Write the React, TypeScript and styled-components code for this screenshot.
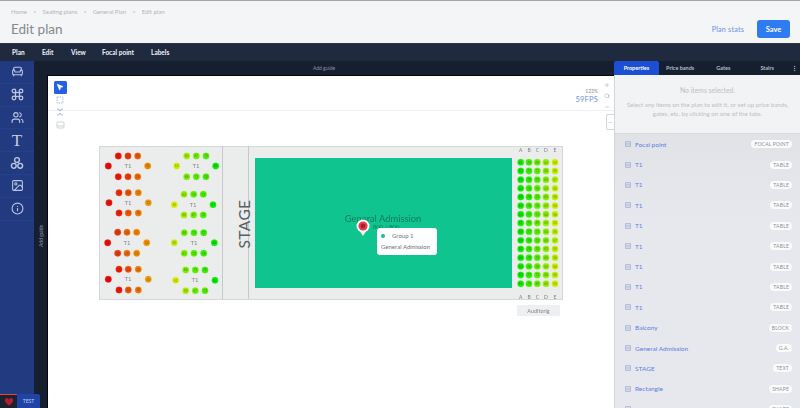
import React from 'react';
import styled, { createGlobalStyle } from 'styled-components';
import { Armchair, Users, Image, Info, Search, Plus, Minus, MousePointer2, MoreVertical } from 'lucide-react';

const GlobalStyle = createGlobalStyle`
  html, body { margin: 0; padding: 0; }
  body { font-family: Lato, "Open Sans", sans-serif; background: #fff; }
`;

const Page = styled.div`
  position: relative;
  width: 800px;
  height: 408px;
  display: flex;
  flex-direction: column;
  overflow: hidden;
`;

const Header = styled.header`
  height: 42px;
  flex: none;
  box-sizing: content-box;
  border-top: 1px solid #a3a5a8;
  border-bottom: 1px solid #30343c;
  background: #f3f5f7;
  display: flex;
  justify-content: space-between;
  align-items: center;
  padding: 0 10px 0 11px;
`;

const Breadcrumbs = styled.div`
  display: flex;
  gap: 6px;
  font-size: 6px;
  line-height: 8px;
  color: #b2b5b9;
  margin-bottom: 5px;
`;

const Title = styled.h1`
  margin: 0;
  font-size: 13.5px;
  line-height: 16px;
  font-weight: 400;
  color: #85888c;
`;

const HeaderActions = styled.div`
  display: flex;
  align-items: center;
  gap: 13px;
  padding-top: 14px;
`;

const LinkButton = styled.span`
  font-size: 7.2px;
  color: #6a8fe8;
  letter-spacing: 0.2px;
`;

const SaveButton = styled.button`
  width: 33px;
  height: 18px;
  border: none;
  border-radius: 3px;
  background: #2f7bf2;
  color: #fff;
  font: 700 7.5px Lato, sans-serif;
  padding: 0;
`;

const MenuBar = styled.nav`
  height: 17px;
  flex: none;
  background: #1f2a3e;
  display: flex;
  align-items: center;
  padding-left: 12px;
`;

const MenuItem = styled.span<{ $w: number }>`
  width: ${(p) => p.$w}px;
  font-size: 6.5px;
  font-weight: 700;
  color: #f1f3f7;
`;

const Body = styled.div`
  flex: 1;
  display: flex;
  min-height: 0;
`;

const SideNav = styled.aside`
  width: 34px;
  flex: none;
  background: #223a80;
  display: flex;
  flex-direction: column;
  align-items: center;
  padding-top: 0;
`;

const SideButton = styled.div`
  width: 34px;
  height: 22.8px;
  display: flex;
  align-items: center;
  justify-content: center;
  color: #bcc7e3;
  border-bottom: 1px solid #27408a;
  box-sizing: border-box;
`;

const SerifT = styled.span`
  font: 400 17px "Liberation Serif", serif;
  color: #c6cfe7;
  line-height: 1;
`;

const Workspace = styled.main`
  flex: 1;
  display: flex;
  flex-direction: column;
  background: #161f30;
  min-width: 0;
`;

const GuideTop = styled.div`
  height: 14px;
  flex: none;
  display: flex;
  align-items: center;
  justify-content: center;
  font-size: 5px;
  color: #8b93a3;
`;

const WorkRow = styled.div`
  flex: 1;
  display: flex;
  min-height: 0;
`;

const GuideLeft = styled.div`
  width: 13px;
  flex: none;
  display: flex;
  align-items: center;
  justify-content: center;
  padding-top: 12px;
  font-size: 5px;
  color: #8b93a3;
  writing-mode: vertical-rl;
  transform: rotate(180deg);
`;

const Canvas = styled.div`
  position: relative;
  flex: 1;
  background: #fff;
  border-left: 1px solid #05070c;
  border-top: 1px solid #05070c;
`;

const GuideLine = styled.div`
  position: absolute;
  left: 0;
  right: 0;
  top: 34px;
  border-top: 1px solid #eef0f2;
`;

const ToolColumn = styled.div`
  position: absolute;
  left: 5px;
  top: 5px;
  width: 14px;
  display: flex;
  flex-direction: column;
  align-items: center;
`;

const ToolButton = styled.div<{ $active?: boolean }>`
  width: 13px;
  height: 12.6px;
  border-radius: 1.5px;
  display: flex;
  align-items: center;
  justify-content: center;
  background: ${(p) => (p.$active ? '#2460e0' : 'transparent')};
  color: ${(p) => (p.$active ? '#fff' : '#8fa6dc')};
`;

const Stats = styled.div`
  position: absolute;
  right: 16px;
  top: 12px;
  text-align: right;
`;

const ZoomLevel = styled.div`
  font-size: 5px;
  line-height: 7px;
  color: #8c8f94;
`;

const Fps = styled.div`
  font-size: 7.5px;
  line-height: 10px;
  color: #6f8fe6;
  letter-spacing: 0.2px;
`;

const ZoomColumn = styled.div`
  position: absolute;
  right: 1px;
  top: 4px;
  width: 12px;
  display: flex;
  flex-direction: column;
  align-items: center;
  gap: 5px;
  padding: 2px 0;
  color: #a0a4aa;
`;

const SideTab = styled.div`
  position: absolute;
  right: 0;
  top: 38px;
  width: 8px;
  height: 16px;
  box-sizing: border-box;
  border: 1px solid #d3d6da;
  border-right: none;
  border-radius: 2px 0 0 2px;
  background: #fff;
  color: #a0a4aa;
  display: flex;
  align-items: center;
  justify-content: center;
`;

const PlanDrawing = styled.svg`
  position: absolute;
  left: 51px;
  top: 70px;
  display: block;
  filter: blur(0.35px);
`;

const Pin = styled.svg`
  position: absolute;
  left: 308px;
  top: 143px;
`;

const PinTooltip = styled.div`
  position: absolute;
  left: 329px;
  top: 152px;
  width: 60px;
  height: 27px;
  box-sizing: border-box;
  background: #fff;
  border-radius: 3px;
  padding: 4px 0 0 4px;
  display: flex;
  flex-direction: column;
  gap: 3px;
  font-size: 6px;
  line-height: 8px;
  color: #6d7278;
`;

const TooltipRow = styled.div`
  display: flex;
  align-items: center;
  gap: 7px;
`;

const GroupDot = styled.span`
  width: 4px;
  height: 4px;
  border-radius: 50%;
  background: #0dc48c;
`;

const RightPanel = styled.section`
  width: 186px;
  flex: none;
  display: flex;
  flex-direction: column;
  background: linear-gradient(#dcdddf, #e6e8ee 45%);
  border-left: 1px solid #d2d5d9;
  box-sizing: border-box;
`;

const Tabs = styled.div`
  height: 14px;
  flex: none;
  display: flex;
  background: #161f30;
  margin-left: -1px;
`;

const Tab = styled.div<{ $active?: boolean; $w: number }>`
  width: ${(p) => p.$w}px;
  display: flex;
  align-items: center;
  justify-content: center;
  font-size: 5.5px;
  font-weight: 700;
  color: ${(p) => (p.$active ? '#fff' : '#b4b9c4')};
  background: ${(p) => (p.$active ? '#1c4fd6' : 'transparent')};
  border-radius: ${(p) => (p.$active ? '2px 2px 0 0' : '0')};
`;

const EmptyState = styled.div`
  height: 59px;
  flex: none;
  box-sizing: border-box;
  background: #f1f3f5;
  border-bottom: 1px solid #d8dbdf;
  padding-top: 11px;
  text-align: center;
  color: #bdc0c5;
  font-size: 6.2px;
  line-height: 9px;
`;

const EmptyTitle = styled.div`
  margin-bottom: 5px;
  font-size: 6.8px;
`;

const ItemList = styled.ul`
  list-style: none;
  margin: 0;
  padding: 0;
`;

const Item = styled.li`
  height: 20.4px;
  display: flex;
  align-items: center;
  padding: 0 8px 0 10px;
  gap: 4px;
  font-size: 6.5px;
  color: #5f7de2;
`;

const ItemName = styled.span`
  flex: 1;
`;

const Badge = styled.span`
  background: #fafbfb;
  color: #8b8f95;
  border-radius: 4px;
  font-size: 5px;
  line-height: 8px;
  padding: 0 3px;
  letter-spacing: 0.2px;
`;

const Corner = styled.div`
  position: absolute;
  left: 0;
  bottom: 0;
  display: flex;
  align-items: flex-end;
  width: 40px;
  height: 15px;
`;

const RecordTile = styled.div`
  width: 17px;
  height: 14px;
  box-sizing: border-box;
  background: #1b2232;
  border-top: 1px solid #e8463c;
  display: flex;
  align-items: center;
  justify-content: center;
`;

const TestTile = styled.div`
  flex: 1;
  height: 14px;
  background: #1f43a6;
  border-radius: 2px 2px 0 0;
  color: #c2cde9;
  font-size: 5px;
  display: flex;
  align-items: center;
  justify-content: center;
`;

const TableIcon = () => (
  <svg width="13" height="13" viewBox="0 0 13 13" fill="none" stroke="currentColor" strokeWidth="1.3">
    <rect x="4.5" y="4.5" width="4" height="4" />
    <circle cx="3" cy="3" r="1.8" />
    <circle cx="10" cy="3" r="1.8" />
    <circle cx="3" cy="10" r="1.8" />
    <circle cx="10" cy="10" r="1.8" />
  </svg>
);

const ShapesIcon = () => (
  <svg width="14" height="14" viewBox="0 0 14 14" fill="none" stroke="currentColor" strokeWidth="1.4">
    <circle cx="7" cy="4" r="2.4" />
    <circle cx="3.8" cy="9.8" r="2.4" />
    <circle cx="10.2" cy="9.8" r="2.4" />
  </svg>
);

const HandleIcon = () => (
  <svg width="6" height="6" viewBox="0 0 6 6" stroke="#a9b4d6" strokeWidth="0.8">
    <path d="M0.5 0.5h5M0.5 2.2h5M0.5 3.9h5M0.5 5.5h5M0.5 0.5v5M5.5 0.5v5" fill="none" />
  </svg>
);

const SelectIcon = () => (
  <svg width="8" height="8" viewBox="0 0 8 8" fill="none" stroke="currentColor" strokeWidth="0.8" strokeDasharray="1.5 1">
    <rect x="1" y="1" width="6" height="6" />
  </svg>
);

const ExpandIcon = () => (
  <svg width="8" height="8" viewBox="0 0 8 8" fill="none" stroke="currentColor" strokeWidth="0.9">
    <path d="M1 1h1.5L4 3l1.5-2H7M1 7h1.5L4 5l1.5 2H7" />
  </svg>
);

const FrameIcon = () => (
  <svg width="9" height="8" viewBox="0 0 9 8" fill="none" stroke="#c3c6cb" strokeWidth="0.8">
    <rect x="1" y="1" width="7" height="6" rx="1" />
    <path d="M1 5h7" />
  </svg>
);

// page coordinates of each table, hues run red to green with the price band
type TableSeats = {
  rows: [number, number, number];
  xs: [number, number, number];
  left: number;
  right: number;
  topHues: number[];
  botHues: number[];
  leftHue: number;
  rightHue: number;
  label: number;
};

const tables: TableSeats[] = [
  { rows: [156, 166, 176.7], xs: [118.3, 128, 137.7], left: 108.3, right: 147.7, topHues: [3, 12, 22], botHues: [4, 14, 26], leftHue: 0, rightHue: 34, label: 128 },
  { rows: [192.7, 202.7, 213], xs: [119, 128.3, 138.3], left: 109, right: 148.3, topHues: [10, 20, 32], botHues: [6, 22, 30], leftHue: 2, rightHue: 38, label: 128 },
  { rows: [232.3, 242.7, 253.3], xs: [117.7, 127, 136.7], left: 107.7, right: 146.7, topHues: [12, 24, 32], botHues: [14, 26, 34], leftHue: 2, rightHue: 36, label: 127 },
  { rows: [269.3, 279.3, 290], xs: [119, 128.3, 138.3], left: 108.3, right: 148.3, topHues: [6, 18, 30], botHues: [4, 20, 28], leftHue: 0, rightHue: 38, label: 128 },
  { rows: [156, 166, 176.7], xs: [186.7, 196.3, 206], left: 176.7, right: 215.7, topHues: [80, 92, 100], botHues: [90, 98, 104], leftHue: 68, rightHue: 120, label: 196 },
  { rows: [194.3, 204.7, 215], xs: [184, 193.7, 203.3], left: 174.3, right: 213, topHues: [84, 96, 102], botHues: [80, 92, 100], leftHue: 66, rightHue: 116, label: 193 },
  { rows: [232.7, 242.7, 253.3], xs: [184.3, 194, 203.7], left: 174.3, right: 214.3, topHues: [94, 102, 108], botHues: [92, 100, 106], leftHue: 72, rightHue: 120, label: 194 },
  { rows: [270, 280.3, 290.7], xs: [185.7, 195.3, 205], left: 175.7, right: 215, topHues: [90, 98, 106], botHues: [78, 92, 100], leftHue: 66, rightHue: 120, label: 195 },
];

const blockXs = [520.7, 529, 537.3, 546, 555];
const blockHues = [118, 108, 98, 86, 72];
const blockRows = Array.from({ length: 15 }, (_, i) => 162.3 + i * 8.67);
const columnLetters = ['A', 'B', 'C', 'D', 'E'];

const Seat = ({ x, y, hue }: { x: number; y: number; hue: number }) => (
  <g>
    <circle cx={x} cy={y} r={3.2} fill={`hsl(${hue}, 95%, 47%)`} stroke={`hsla(${hue}, 100%, 55%, 0.3)`} strokeWidth={1} />
    <text x={x} y={y + 1.2} fontSize={3.2} textAnchor="middle" fill="rgba(60,60,20,0.55)">
      {Math.round(12 + hue * 0.6)}
    </text>
  </g>
);

const SeatingPlan = () => (
  <PlanDrawing width="466" height="173" viewBox="99 146 466 173" fontFamily="Lato, sans-serif">
    <rect x="99.5" y="146.5" width="463" height="153" fill="#ebecec" stroke="#d6d7d8" />
    <path d="M222.5 146v153M248.5 146v153" stroke="#c6c8c9" />
    <rect x="255" y="158" width="257" height="130" fill="#0fc48e" />
    <text transform="translate(250 224) rotate(-90)" fontSize="15.5" fill="#5a5f63" letterSpacing="0.4" textAnchor="middle">
      STAGE
    </text>
    <text x="383" y="222" fontSize="9.4" textAnchor="middle" fill="#137a5c">General Admission</text>
    <text x="386" y="229" fontSize="6" textAnchor="middle" fill="#137a5c">800 / 800</text>
    {tables.map((t, i) => (
      <g key={i}>
        {t.xs.map((x, j) => (
          <Seat key={`t${j}`} x={x} y={t.rows[0]} hue={t.topHues[j]} />
        ))}
        {t.xs.map((x, j) => (
          <Seat key={`b${j}`} x={x} y={t.rows[2]} hue={t.botHues[j]} />
        ))}
        <Seat x={t.left} y={t.rows[1]} hue={t.leftHue} />
        <Seat x={t.right} y={t.rows[1]} hue={t.rightHue} />
        <text x={t.label} y={t.rows[1] + 2} fontSize="6" textAnchor="middle" fill="#85888a">T1</text>
      </g>
    ))}
    {blockRows.map((y, r) =>
      blockXs.map((x, c) => <Seat key={`${r}-${c}`} x={x} y={y} hue={blockHues[c] + ((r * 3) % 7) - 3} />)
    )}
    {columnLetters.map((l, c) => (
      <g key={l} fontSize="5" fill="#7f8285" textAnchor="middle">
        <text x={blockXs[c]} y={152}>{l}</text>
        <text x={blockXs[c]} y={299}>{l}</text>
      </g>
    ))}
    <rect x="517" y="305" width="43" height="11" fill="#eeeff0" />
    <text x="538.5" y="312.5" fontSize="5.5" textAnchor="middle" fill="#85888c">Auditorig</text>
  </PlanDrawing>
);

const items: [string, string][] = [
  ['Focal point', 'FOCAL POINT'],
  ['T1', 'TABLE'],
  ['T1', 'TABLE'],
  ['T1', 'TABLE'],
  ['T1', 'TABLE'],
  ['T1', 'TABLE'],
  ['T1', 'TABLE'],
  ['T1', 'TABLE'],
  ['T1', 'TABLE'],
  ['Balcony', 'BLOCK'],
  ['General Admission', 'G.A.'],
  ['STAGE', 'TEXT'],
  ['Rectangle', 'SHAPE'],
  ['Barricade', 'SHAPE'],
];

const App: React.FC = () => (
  <Page>
    <GlobalStyle />
    <Header>
      <div>
        <Breadcrumbs>
          <span>Home</span><span>&gt;</span>
          <span>Seating plans</span><span>&gt;</span>
          <span>General Plan</span><span>&gt;</span>
          <span>Edit plan</span>
        </Breadcrumbs>
        <Title>Edit plan</Title>
      </div>
      <HeaderActions>
        <LinkButton>Plan stats</LinkButton>
        <SaveButton>Save</SaveButton>
      </HeaderActions>
    </Header>
    <MenuBar>
      <MenuItem $w={30}>Plan</MenuItem>
      <MenuItem $w={29}>Edit</MenuItem>
      <MenuItem $w={31}>View</MenuItem>
      <MenuItem $w={49}>Focal point</MenuItem>
      <MenuItem $w={40}>Labels</MenuItem>
    </MenuBar>
    <Body>
      <SideNav>
        <SideButton><Armchair size={13} /></SideButton>
        <SideButton><TableIcon /></SideButton>
        <SideButton><Users size={13} /></SideButton>
        <SideButton><SerifT>T</SerifT></SideButton>
        <SideButton><ShapesIcon /></SideButton>
        <SideButton><Image size={13} /></SideButton>
        <SideButton><Info size={13} /></SideButton>
      </SideNav>
      <Workspace>
        <GuideTop>Add guide</GuideTop>
        <WorkRow>
          <GuideLeft>Add guide</GuideLeft>
          <Canvas>
            <GuideLine />
            <ToolColumn>
              <ToolButton $active><MousePointer2 size={8} fill="#fff" /></ToolButton>
              <ToolButton><SelectIcon /></ToolButton>
              <ToolButton><ExpandIcon /></ToolButton>
              <ToolButton><FrameIcon /></ToolButton>
            </ToolColumn>
            <Stats>
              <ZoomLevel>123%</ZoomLevel>
              <Fps>59FPS</Fps>
            </Stats>
            <ZoomColumn>
              <Plus size={6} />
              <Search size={6} />
              <Minus size={6} />
            </ZoomColumn>
            <SideTab><Minus size={5} /></SideTab>
            <SeatingPlan />
            <Pin width="14" height="18" viewBox="0 0 14 18">
              <circle cx="7" cy="7" r="6.5" fill="#fff" />
              <path d="M4 12.5L7 17l3-4.5z" fill="#f1eeee" />
              <circle cx="7" cy="7" r="4.6" fill="#e5404e" />
              <circle cx="7" cy="7" r="2.4" fill="#a91f2c" />
            </Pin>
            <PinTooltip>
              <TooltipRow><GroupDot />Group 1</TooltipRow>
              <span>General Admission</span>
            </PinTooltip>
          </Canvas>
        </WorkRow>
      </Workspace>
      <RightPanel>
        <Tabs>
          <Tab $active $w={45}>Properties</Tab>
          <Tab $w={43}>Price bands</Tab>
          <Tab $w={44}>Gates</Tab>
          <Tab $w={44}>Stairs</Tab>
          <Tab $w={11}><MoreVertical size={7} /></Tab>
        </Tabs>
        <EmptyState>
          <EmptyTitle>No items selected.</EmptyTitle>
          <div>Select any items on the plan to edit it, or set up price bands,</div>
          <div>gates, etc. by clicking on one of the tabs.</div>
        </EmptyState>
        <ItemList>
          {items.map(([name, kind], i) => (
            <Item key={i}>
              <HandleIcon />
              <ItemName>{name}</ItemName>
              <Badge>{kind}</Badge>
            </Item>
          ))}
        </ItemList>
      </RightPanel>
    </Body>
    <Corner>
      <RecordTile>
        <svg width="10" height="10" viewBox="0 0 24 24" fill="#b3202c">
          <path d="M12 21C5 15 2 12 2 8a5 5 0 0 1 10-1 5 5 0 0 1 10 1c0 4-3 7-10 13z" />
        </svg>
      </RecordTile>
      <TestTile>TEST</TestTile>
    </Corner>
  </Page>
);

export default App;
